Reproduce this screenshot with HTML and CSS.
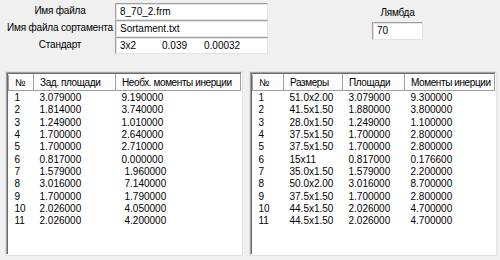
FILE: index.html
```html
<!DOCTYPE html>
<html lang="ru">
<head>
    <meta charset="UTF-8">
    <title>Сортамент</title>
    <link rel="stylesheet" href="styles.css">
</head>
<body>
    <div class="top">
        <div class="fields">
            <span class="label">Имя файла</span>
            <div class="edit">8_70_2.frm</div>
            <span class="label">Имя файла сортамента</span>
            <div class="edit">Sortament.txt</div>
            <span class="label">Стандарт</span>
            <div class="edit std"><span>3x2</span><span>0.039</span><span>0.00032</span></div>
        </div>
        <div class="lambda">
            <span class="label">Лямбда</span>
            <div class="edit">70</div>
        </div>
    </div>

    <div class="lists">
        <!-- Заданные значения -->
        <div class="list list-left">
            <table>
                <colgroup><col style="width:25px"><col style="width:82px"><col></colgroup>
                <thead>
                    <tr><th>№</th><th>Зад. площади</th><th>Необх. моменты инерции</th></tr>
                </thead>
                <tbody>
                    <tr><td>1</td><td>3.079000</td><td>9.190000</td></tr>
                    <tr><td>2</td><td>1.814000</td><td>3.740000</td></tr>
                    <tr><td>3</td><td>1.249000</td><td>1.010000</td></tr>
                    <tr><td>4</td><td>1.700000</td><td>2.640000</td></tr>
                    <tr><td>5</td><td>1.700000</td><td>2.710000</td></tr>
                    <tr><td>6</td><td>0.817000</td><td>0.000000</td></tr>
                    <tr class="shift"><td>7</td><td>1.579000</td><td>1.960000</td></tr>
                    <tr class="shift"><td>8</td><td>3.016000</td><td>7.140000</td></tr>
                    <tr class="shift"><td>9</td><td>1.700000</td><td>1.790000</td></tr>
                    <tr class="shift"><td>10</td><td>2.026000</td><td>4.050000</td></tr>
                    <tr class="shift"><td>11</td><td>2.026000</td><td>4.200000</td></tr>
                </tbody>
            </table>
        </div>

        <!-- Подобранные профили -->
        <div class="list list-right">
            <table>
                <colgroup><col style="width:31px"><col style="width:59px"><col style="width:62px"><col></colgroup>
                <thead>
                    <tr><th>№</th><th>Размеры</th><th>Площади</th><th>Моменты инерции</th></tr>
                </thead>
                <tbody>
                    <tr><td>1</td><td>51.0x2.00</td><td>3.079000</td><td>9.300000</td></tr>
                    <tr><td>2</td><td>41.5x1.50</td><td>1.880000</td><td>3.800000</td></tr>
                    <tr><td>3</td><td>28.0x1.50</td><td>1.249000</td><td>1.100000</td></tr>
                    <tr><td>4</td><td>37.5x1.50</td><td>1.700000</td><td>2.800000</td></tr>
                    <tr><td>5</td><td>37.5x1.50</td><td>1.700000</td><td>2.800000</td></tr>
                    <tr><td>6</td><td>15x11</td><td>0.817000</td><td>0.176600</td></tr>
                    <tr><td>7</td><td>35.0x1.50</td><td>1.579000</td><td>2.200000</td></tr>
                    <tr><td>8</td><td>50.0x2.00</td><td>3.016000</td><td>8.700000</td></tr>
                    <tr><td>9</td><td>37.5x1.50</td><td>1.700000</td><td>2.800000</td></tr>
                    <tr><td>10</td><td>44.5x1.50</td><td>2.026000</td><td>4.700000</td></tr>
                    <tr><td>11</td><td>44.5x1.50</td><td>2.026000</td><td>4.700000</td></tr>
                </tbody>
            </table>
        </div>
    </div>
</body>
</html>
```

FILE: styles.css
```css
/* Общие стили окна */
body {
    margin: 0;
    width: 500px;
    height: 260px;
    background-color: #f0f0f0;
    font-family: "Liberation Sans", Arial, sans-serif;
    font-size: 10px;
    color: #000;
    overflow: hidden;
}

/* Верхняя часть с полями */
.top {
    display: flex;
    height: 68px;
}

.fields {
    display: grid;
    grid-template-columns: 110px 153px;
    grid-auto-rows: 17px;
    padding: 3px 0 0 5px;
    align-items: center;
}

.label {
    text-align: center;
    line-height: 12px;
    margin-top: -2px;
    letter-spacing: -0.2px;
}

.edit {
    height: 17px;
    box-sizing: border-box;
    background-color: #ffffff;
    border: 1px solid;
    border-color: #a0a0a0 #e3e3e3 #e3e3e3 #a0a0a0;
    box-shadow: inset 1px 1px 0 #e3e3e3;
    padding: 0 4px;
    line-height: 15px;
    white-space: nowrap;
}

.std span {
    display: inline-block;
    width: 42px;
}

.lambda {
    display: flex;
    flex-direction: column;
    align-items: center;
    margin-left: 104px;
    padding-top: 7px;
    width: 51px;
}

.lambda .label {
    margin: 0 0 3px 0;
}

.lambda .edit {
    width: 51px;
    height: 18px;
    line-height: 16px;
}

/* Списки */
.lists {
    display: flex;
    gap: 8px;
    padding: 4px 0 0 6px;
}

.list {
    box-sizing: border-box;
    height: 183px;
    background-color: #ffffff;
    border: 1px solid;
    border-color: #a0a0a0 #ffffff #ffffff #a0a0a0;
    box-shadow: inset 1px 1px 0 #696969, 0 0 0 1px #e3e3e3;
    padding: 1px 0 0 1px;
}

.list-left {
    width: 236px;
}

.list-right {
    width: 246px;
}

table {
    width: 100%;
    border-collapse: collapse;
    table-layout: fixed;
}

th {
    height: 15px;
    padding: 0 0 0 6px;
    text-align: left;
    font-weight: normal;
    letter-spacing: -0.4px;
    background-color: #fcfcfc;
    border: 1px solid #a0a0a0;
    border-top-color: #ffffff;
    white-space: nowrap;
    overflow: hidden;
}

td {
    height: 12.3px;
    padding: 0 0 0 6px;
    line-height: 12px;
    white-space: nowrap;
}

tbody tr:first-child td {
    padding-top: 1px;
}

.shift td:nth-child(3) {
    padding-left: 9px;
}
```
